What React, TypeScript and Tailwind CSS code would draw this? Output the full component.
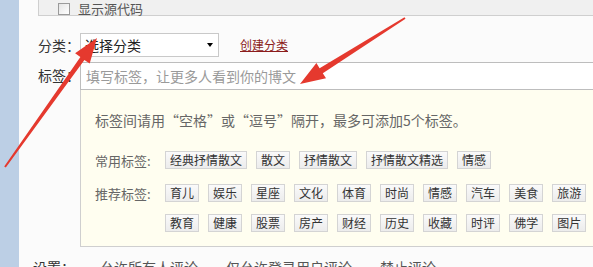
const font = { fontFamily: '"Noto Sans CJK SC", "Noto Sans", sans-serif' };

const commonTags = ["经典抒情散文", "散文", "抒情散文", "抒情散文精选", "情感"];
const recommendRows = [
  ["育儿", "娱乐", "星座", "文化", "体育", "时尚", "情感", "汽车", "美食", "旅游"],
  ["教育", "健康", "股票", "房产", "财经", "历史", "收藏", "时评", "佛学", "图片"],
];

function Tag({ label }: { label: string }) {
  return (
    <span className="inline-flex h-[18px] shrink-0 items-center border border-[#d4d4d4] bg-gradient-to-b from-[#fafafa] to-[#ececec] px-[4px] text-[12px] leading-none text-[#333]">
      {label}
    </span>
  );
}

function Arrows() {
  return (
    <svg className="pointer-events-none absolute left-0 top-0" width="593" height="267" viewBox="0 0 593 267">
      <polygon
        fill="#e5392e"
        points="97,38 89.7,63.6 84.4,59.9 5.8,167.6 4.2,166.4 80.4,57 75.1,53.2"
      />
      <polygon
        fill="#e5392e"
        points="300,84 316.4,63.1 319.6,68.2 404.5,17.2 405.5,18.8 322.8,73.2 326,78.3"
      />
    </svg>
  );
}

export default function App() {
  return (
    <div className="relative flex h-[267px] w-[593px] overflow-hidden bg-[#fbfbfb]" style={font}>
      <div className="w-[19px] shrink-0 bg-[#bccfe5]" />
      <div className="flex w-[700px] shrink-0 flex-col pl-[19px]">
        <div className="flex h-[23px] items-center border-x border-b border-[#cfcfcf] bg-[#f0f0f0] pl-[19px] pt-[2px]">
          <span className="h-[12px] w-[12px] border border-[#9a9a9a] bg-gradient-to-br from-[#e4e4e4] to-white" />
          <span className="ml-[8px] text-[13px] leading-none text-[#555]">显示源代码</span>
        </div>

        <div className="mt-[17px] flex h-[24px] items-center">
          <span className="w-[42px] text-[14px] leading-none text-[#333]">分类：</span>
          <div className="flex h-[24px] w-[139px] items-center justify-between border border-[#c9c9c9] bg-white pl-[4px] pr-[5px]">
            <span className="text-[14px] leading-none text-[#222]">选择分类</span>
            <span className="h-0 w-0 border-x-[3.5px] border-t-[4px] border-x-transparent border-t-black" />
          </div>
          <a className="ml-[21px] text-[12px] leading-none text-[#8b1c1c] underline">创建分类</a>
        </div>

        <div className="mt-[5px] flex">
          <span className="w-[42px] pt-[6px] text-[14px] leading-none text-[#333]">标签：</span>
          <div className="flex flex-1 flex-col">
            <div className="flex h-[28px] items-center border border-[#bdbdbd] bg-white pl-[5px]">
              <span className="text-[14px] leading-none text-[#9a9a9a]">填写标签，让更多人看到你的博文</span>
            </div>
            <div className="flex h-[157px] flex-col border-x border-b border-[#cfcfcf] bg-[#fffef0] pl-[14px]">
              <p className="mt-[23px] text-[14px] leading-none text-[#666]">
                标签间请用“空格”或“逗号”隔开，最多可添加5个标签。
              </p>
              <div className="mt-[24px] flex items-center">
                <span className="w-[70px] text-[13px] leading-none text-[#666]">常用标签:</span>
                <div className="flex gap-[9px]">
                  {commonTags.map((t) => (
                    <Tag key={t} label={t} />
                  ))}
                </div>
              </div>
              <div className="mt-[15px] flex items-start">
                <span className="w-[70px] pt-[3px] text-[13px] leading-none text-[#666]">推荐标签:</span>
                <div className="flex flex-col gap-[12px]">
                  {recommendRows.map((row, i) => (
                    <div key={i} className="flex gap-[9px]">
                      {row.map((t) => (
                        <Tag key={t} label={t} />
                      ))}
                    </div>
                  ))}
                </div>
              </div>
            </div>
          </div>
        </div>

        <div className="mt-[13px] flex text-[14px] leading-none text-[#333]">
          <span className="-ml-[5px] w-[67px]">设置：</span>
          <span className="text-[#555]">允许所有人评论　　仅允许登录用户评论　　禁止评论</span>
        </div>
      </div>
      <Arrows />
    </div>
  );
}
